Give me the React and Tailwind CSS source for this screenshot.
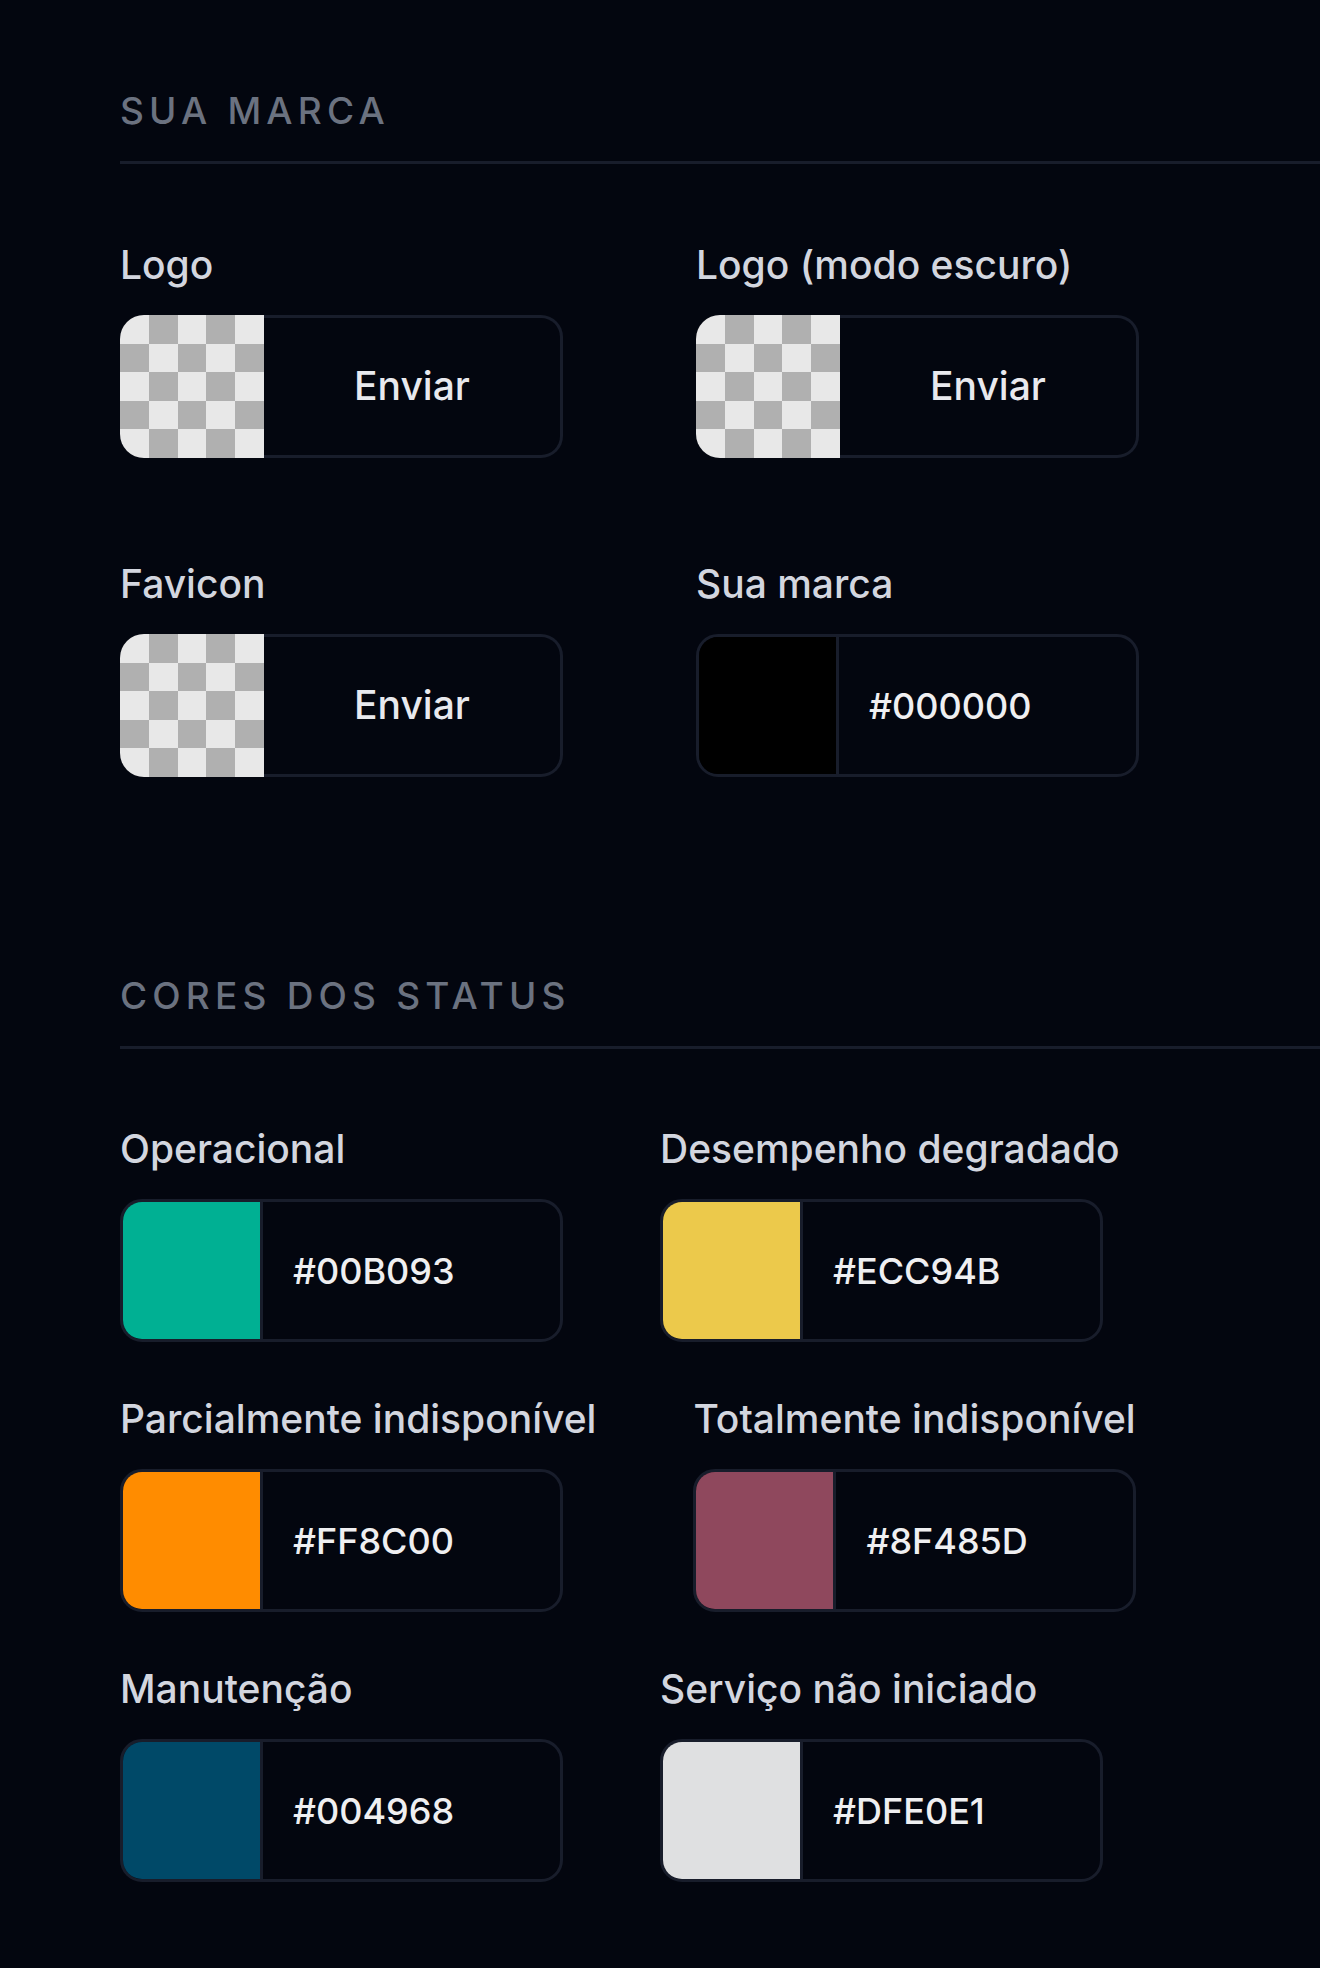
import React from 'react'

// Brand settings: upload slots for logos/favicon and the colour pickers per status.
const statusColors = [
  { label: 'Operacional', hex: '#00B093' },
  { label: 'Desempenho degradado', hex: '#ECC94B' },
  { label: 'Parcialmente indisponível', hex: '#FF8C00' },
  { label: 'Totalmente indisponível', hex: '#8F485D' },
  { label: 'Manutenção', hex: '#004968' },
  { label: 'Serviço não iniciado', hex: '#DFE0E1' },
]

function SectionTitle({ children }) {
  return (
    <h2 className="border-b-[3px] border-[#181d2b] pb-[30px] text-[37px] font-medium uppercase leading-[40px] tracking-[0.14em] text-[#6b7280]">
      {children}
    </h2>
  )
}

function Label({ children }) {
  return (
    <p className="whitespace-nowrap text-[39px] font-medium leading-[48px] text-[#d3d6df]">
      {children}
    </p>
  )
}

// 5x5 transparency checkerboard shown until a file is uploaded
function Checker() {
  const cells = Array.from({ length: 25 }, (_, i) => (Math.floor(i / 5) + (i % 5)) % 2 === 0)
  return (
    <div className="grid h-[143px] w-[144px] shrink-0 grid-cols-5 grid-rows-5 overflow-hidden rounded-l-[24px]">
      {cells.map((light, i) => (
        <span key={i} className={light ? 'bg-[#e8e8e8]' : 'bg-[#b0b0b0]'} />
      ))}
    </div>
  )
}

function UploadField({ label }) {
  return (
    <div>
      <Label>{label}</Label>
      <div className="mt-[26px] flex w-[443px]">
        <Checker />
        <button className="flex h-[143px] flex-1 items-center justify-center rounded-r-[22px] border-y-[3px] border-r-[3px] border-[#181d2b] text-[39px] font-medium text-[#e8e9ee]">
          Enviar
        </button>
      </div>
    </div>
  )
}

function ColorField({ label, hex }) {
  return (
    <div>
      <Label>{label}</Label>
      <div className="mt-[26px] flex h-[143px] w-[443px] overflow-hidden rounded-[22px] border-[3px] border-[#181d2b]">
        <span className="h-full w-[140px] shrink-0 border-r-[3px] border-[#181d2b]" style={{ backgroundColor: hex }} />
        <span className="flex items-center pl-[30px] text-[36px] font-medium text-[#efeff1]">{hex}</span>
      </div>
    </div>
  )
}

export default function App() {
  return (
    <div className="min-h-screen bg-[#03060f] pl-[120px] pt-[91px] font-['Inter',sans-serif]">
      <section>
        <SectionTitle>Sua marca</SectionTitle>
        <div className="mt-[77px] grid grid-cols-[576px_576px] gap-y-[102px]">
          <UploadField label="Logo" />
          <UploadField label="Logo (modo escuro)" />
          <UploadField label="Favicon" />
          <ColorField label="Sua marca" hex="#000000" />
        </div>
      </section>

      <section className="mt-[199px] pb-[85px]">
        <SectionTitle>Cores dos status</SectionTitle>
        <div className="mt-[76px] flex flex-wrap gap-x-[97px] gap-y-[53px]">
          {statusColors.map((s) => (
            <ColorField key={s.label} label={s.label} hex={s.hex} />
          ))}
        </div>
      </section>
    </div>
  )
}
